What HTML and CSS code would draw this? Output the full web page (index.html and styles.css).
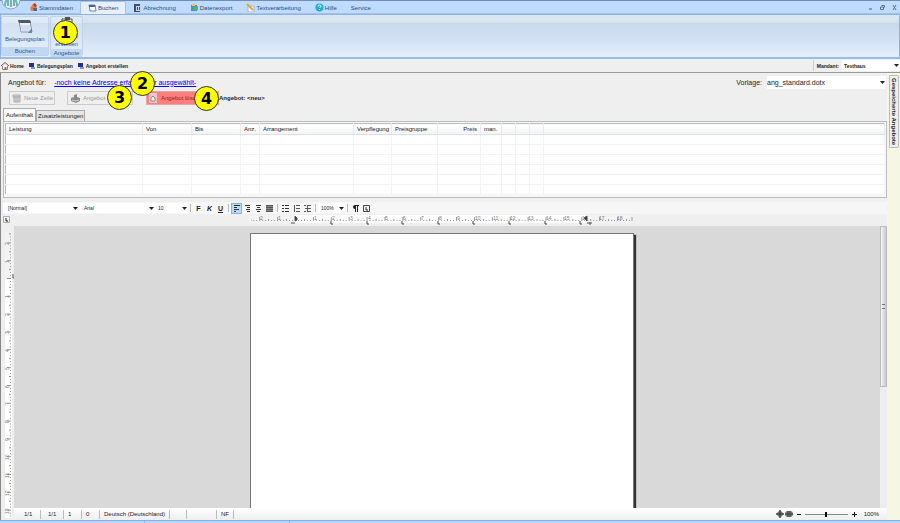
FILE: index.html
```html
<!DOCTYPE html>
<html lang="de">
<head>
  <meta charset="UTF-8">
  <meta name="viewport" content="width=device-width, initial-scale=1.0">
  <title>Angebot erstellen</title>
  <link rel="stylesheet" href="styles.css">
</head>
<body>
  <header class="menubar">
    <button class="orb" type="button" aria-label="Start">
      <svg width="20" height="20" viewBox="0 0 20 20"><circle cx="10" cy="10" r="9" fill="#e9eef3" stroke="#8fa3b8"/><path d="M4 16C4 9 8 7 10 7s6 2 6 9M10 7v10M7 10v6M13 10v6" fill="none" stroke="#6bb5b8" stroke-width="2"/></svg>
    </button>
    <nav class="menu">
      <a href="#"><svg width="9" height="9" viewBox="0 0 9 9"><path d="M1 5l3-4 4 3-2 4H2z" fill="#e8812f"/><path d="M4 1l2-1 2 3-2 1z" fill="#a33b2c"/><path d="M4 5h4v3H5z" fill="#4267a8"/></svg>Stammdaten</a>
      <a href="#" class="active"><svg width="9" height="9" viewBox="0 0 9 9"><path d="M1 1h6l1 6H2z" fill="#fff" stroke="#71859c"/><path d="M1 1h6v2H1z" fill="#456891"/></svg>Buchen</a>
      <a href="#"><svg width="9" height="9" viewBox="0 0 9 9"><path d="M1 1h6v8H1z" fill="#39516f"/><path d="M3 3h5v5H3z" fill="#c6d3e2"/><path d="M4 4h1v3H4zM6 4h1v3H6z" fill="#39516f"/></svg>Abrechnung</a>
      <a href="#"><svg width="9" height="9" viewBox="0 0 9 9"><path d="M1 2h6v6H1z" fill="#4f91c9"/><path d="M2 1h3v2H2z" fill="#f0c94d"/><path d="M4 4l4-1v4H4z" fill="#4db56a"/></svg>Datenexport</a>
      <a href="#"><svg width="9" height="9" viewBox="0 0 9 9"><path d="M2 3h6v6H2z" fill="#f6f8fb" stroke="#a7b6c8"/><path d="M1 1l6 6" stroke="#e5a62c" stroke-width="2"/></svg>Textverarbeitung</a>
      <a href="#"><svg width="9" height="9" viewBox="0 0 9 9"><circle cx="4.500" cy="4.500" r="4" fill="#23abc9"/><path d="M3 3.500q0-1.500 1.500-1.500T6 3.500L4.500 5M4.500 6v1" fill="none" stroke="#fff"/></svg>Hilfe</a>
      <a href="#">Service</a>
    </nav>
    <div class="window-buttons">
      <button type="button" aria-label="Minimieren"><svg width="5" height="5" viewBox="0 0 5 5"><path d="M1 4h3" stroke="#4b5a70"/></svg></button>
      <button type="button" aria-label="Wiederherstellen"><svg width="5" height="5" viewBox="0 0 5 5"><path d="M1.500.5h3v2M.5 2h3v2.500h-3z" fill="none" stroke="#5f6f86"/></svg></button>
      <button type="button" aria-label="Schließen"><svg width="5" height="5" viewBox="0 0 5 5"><path d="M1 0l3 5M4 0L1 5" stroke="#5f6f86"/></svg></button>
    </div>
  </header>

  <section class="ribbon">
    <div class="ribbon-group">
      <button type="button" class="ribbon-button">
        <svg width="16" height="14" viewBox="0 0 16 14"><path d="M2 1h11l2 11H4z" fill="#eef4fa" stroke="#8795a6"/><path d="M1 0h12l1 3H2z" fill="#4f5964"/><path d="M4 6h9M4 8h9M5 10h9" stroke="#b7cbe0"/><path d="M11 13l4-5v5z" fill="#5c87b8"/></svg>
        Belegungsplan
      </button>
      <div class="ribbon-title">Buchen</div>
    </div>
    <div class="ribbon-group">
      <button type="button" class="ribbon-button">
        <svg width="16" height="14" viewBox="0 0 16 14"><path d="M3 2h10v11H3z" fill="#f4f6f8" stroke="#47505c"/><path d="M6 0h5v3H6z" fill="#47505c"/></svg>
        Angebot<br>erstellen
        <span class="badge badge-ribbon">1</span>
      </button>
      <div class="ribbon-title">Angebote</div>
    </div>
  </section>

  <div class="breadcrumb">
    <a href="#"><svg width="8" height="8" viewBox="0 0 8 8"><path d="M0 4l4-3.500L8 4" fill="none" stroke="#6b5648"/><path d="M1.500 4v3.500h5V4" fill="#fff" stroke="#888"/><path d="M3.500 5h2v3h-2z" fill="#b0623a"/></svg>Home</a>
    <a href="#"><svg width="8" height="8" viewBox="0 0 8 8"><path d="M1 1h5v4H1z" fill="#22309c"/><path d="M3 5h4v2H3z" fill="#8d95b5"/></svg>Belegungsplan</a>
    <a href="#"><svg width="8" height="8" viewBox="0 0 8 8"><path d="M1 1h5v4H1z" fill="#22309c"/><path d="M3 5h4v2H3z" fill="#8d95b5"/></svg>Angebot erstellen</a>
    <div class="mandant">
      <label for="mandant">Mandant:</label>
      <select id="mandant"><option>Testhaus</option></select>
    </div>
  </div>

  <div class="workspace">
    <main class="content">
      <div class="offer-row">
        <span>Angebot für:</span>
        <a href="#" class="address">-noch keine Adresse erfasst oder ausgewählt-<span class="badge badge-address">2</span></a>
        <div class="template">
          <label for="vorlage">Vorlage:</label>
          <select id="vorlage"><option>ang_standard.dotx</option></select>
        </div>
      </div>

      <div class="action-row">
        <button type="button" class="action new-line">
          <svg width="9" height="9" viewBox="0 0 9 9"><path d="M1 1h7v2H1zM2 3h6v5H2z" fill="#ddd" stroke="#aaa"/><path d="M3 5h4M3 7h4" stroke="#aaa"/></svg>Neue Zeile
        </button>
        <button type="button" class="action book">
          <svg width="10" height="9" viewBox="0 0 10 9"><path d="M1 4l3-1V1l3-1v3l3 1v3L6 9 1 7z" fill="#8b8b8b"/><path d="M2 6l4 1 3-1" fill="none" stroke="#ccc"/></svg>Angebot buchen
          <span class="badge badge-book">3</span>
        </button>
        <button type="button" class="action delete">
          <svg width="9" height="10" viewBox="0 0 9 10"><path d="M0 0h8v10H0z" fill="#e8c9c9"/><path d="M2 8V5l2-2 2 2v3z" fill="#f4eeee" stroke="#9c8585"/></svg>Angebot löschen
          <span class="badge badge-delete">4</span>
        </button>
        <strong class="offer-name">Angebot: &lt;neu&gt;</strong>
      </div>

      <div class="tabs">
        <button type="button" class="tab active">Aufenthalt</button>
        <button type="button" class="tab">Zusatzleistungen</button>
      </div>

      <div class="table-panel">
        <table class="positions">
          <colgroup>
            <col class="w-leistung"><col class="w-date"><col class="w-date"><col class="w-anz"><col class="w-arrangement"><col class="w-verpflegung"><col class="w-gruppe"><col class="w-preis"><col class="w-man"><col class="w-small"><col class="w-small"><col class="w-small"><col>
          </colgroup>
          <thead>
            <tr><th>Leistung</th><th>Von</th><th>Bis</th><th>Anz.</th><th>Arrangement</th><th>Verpflegung</th><th>Preisgruppe</th><th class="right">Preis</th><th>man.</th><th></th><th></th><th></th><th></th></tr>
          </thead>
          <tbody>
            <tr><td></td><td></td><td></td><td></td><td></td><td></td><td></td><td></td><td></td><td></td><td></td><td></td><td></td></tr>
            <tr><td></td><td></td><td></td><td></td><td></td><td></td><td></td><td></td><td></td><td></td><td></td><td></td><td></td></tr>
            <tr><td></td><td></td><td></td><td></td><td></td><td></td><td></td><td></td><td></td><td></td><td></td><td></td><td></td></tr>
            <tr><td></td><td></td><td></td><td></td><td></td><td></td><td></td><td></td><td></td><td></td><td></td><td></td><td></td></tr>
            <tr><td></td><td></td><td></td><td></td><td></td><td></td><td></td><td></td><td></td><td></td><td></td><td></td><td></td></tr>
            <tr><td></td><td></td><td></td><td></td><td></td><td></td><td></td><td></td><td></td><td></td><td></td><td></td><td></td></tr>
          </tbody>
        </table>
      </div>

      <div class="toolbar">
        <select class="style-select" aria-label="Formatvorlage"><option>[Normal]</option></select>
        <select class="font-select" aria-label="Schriftart"><option>Arial</option></select>
        <select class="size-select" aria-label="Schriftgröße"><option>10</option></select>
        <span class="separator"></span>
        <button type="button" class="tool"><b>F</b></button>
        <button type="button" class="tool"><b><i>K</i></b></button>
        <button type="button" class="tool"><b><u>U</u></b></button>
        <span class="separator"></span>
        <button type="button" class="tool pressed" aria-label="Linksbündig"><svg width="7" height="7" viewBox="0 0 7 7"><path d="M1 .5h6M1 2.500h3M1 4.500h5M1 6.500h2" stroke="#333"/></svg></button>
        <button type="button" class="tool" aria-label="Rechtsbündig"><svg width="7" height="7" viewBox="0 0 7 7"><path d="M1 .5h5M3 2.500h3M2 4.500h4M3 6.500h3" stroke="#333"/></svg></button>
        <button type="button" class="tool" aria-label="Zentriert"><svg width="7" height="7" viewBox="0 0 7 7"><path d="M1 .5h5M2 2.500h3M1 4.500h5M2 6.500h3" stroke="#333"/></svg></button>
        <button type="button" class="tool" aria-label="Blocksatz"><svg width="7" height="7" viewBox="0 0 7 7"><path d="M0 0h7v7H0z" fill="#8a8a8a"/><path d="M0 .5h7M0 2.500h7M0 4.500h7M0 6.500h7" stroke="#555"/></svg></button>
        <span class="separator"></span>
        <button type="button" class="tool" aria-label="Aufzählung"><svg width="7" height="7" viewBox="0 0 7 7"><path d="M0 .5h2M0 3.500h2M0 6.500h2M3 .5h4M3 3.500h4M3 6.500h4" stroke="#333"/></svg></button>
        <button type="button" class="tool" aria-label="Nummerierung"><svg width="7" height="7" viewBox="0 0 7 7"><path d="M1.500 0v7M3 .5h4M3 3.500h4M3 6.500h4" stroke="#555"/></svg></button>
        <button type="button" class="tool" aria-label="Gliederung"><svg width="7" height="7" viewBox="0 0 7 7"><path d="M0 .5h2M1 3.500h2M0 6.500h2M3 .5h4M4 3.500h3M3 6.500h4M3.500 0v7" stroke="#555"/></svg></button>
        <span class="separator"></span>
        <select class="zoom-select" aria-label="Zoom"><option>100%</option></select>
        <span class="separator"></span>
        <button type="button" class="tool" aria-label="Absatzmarken"><svg width="7" height="7" viewBox="0 0 7 7"><path d="M3 0h4v1H6v6H5V1H4v6H3V4Q1 4 1 2t2-2z" fill="#222"/></svg></button>
        <button type="button" class="tool" aria-label="Tabulatoren"><svg width="7" height="7" viewBox="0 0 7 7"><path d="M.5.5h6v6h-6z" fill="#fff" stroke="#444"/><path d="M3 2v3h2" fill="none" stroke="#222"/></svg></button>
      </div>

      <div class="editor">
        <div class="ruler-corner"><svg width="7" height="7" viewBox="0 0 7 7"><path d="M.5.5h6v6h-6z" fill="#f8f8f8" stroke="#aaa"/><path d="M3 2v3h2" fill="none" stroke="#111"/></svg></div>
        <div class="ruler-top">
          <svg class="ruler-h" width="384" height="12" viewBox="0 0 384 12">
            <defs><pattern id="ticks" width="18" height="12" patternUnits="userSpaceOnUse" patternTransform="translate(46) scale(.994 1)"><path d="M0 2h1v4H0zM3 5h1v1H3zM6 5h1v1H6zM9 4h1v2H9zM12 5h1v1H12zM15 5h1v1H15z" fill="#999"/></pattern></defs>
            <path d="M0 0h384v8H0z" fill="#f3f3f3"/>
            <path d="M46 0h292v8H46z" fill="#fff"/>
            <path d="M2 0h381v7H2z" fill="url(#ticks)"/>
            <path d="M383 2v4" stroke="#999"/>
            <g class="ruler-numbers">
              <text x="11" y="5">2</text><text x="29" y="5">1</text><text x="65" y="5">1</text><text x="83" y="5">2</text><text x="101" y="5">3</text><text x="119" y="5">4</text><text x="136" y="5">5</text><text x="154" y="5">6</text><text x="172" y="5">7</text><text x="190" y="5">8</text><text x="208" y="5">9</text><text x="226" y="5">10</text><text x="244" y="5">11</text><text x="261" y="5">12</text><text x="279" y="5">13</text><text x="297" y="5">14</text><text x="315" y="5">15</text><text x="333" y="5">16</text><text x="350" y="5">17</text><text x="368" y="5">18</text>
            </g>
            <path d="M46 1l2 2v2l-2 1zM42 8h4M338 1v5l-3-3zM338 8h5M341 7v3" fill="#333" stroke="#555"/>
            <path d="M82 6v3h2M118 6v3h2M153 6v3h2M189 6v3h2M224 6v3h2M260 6v3h2M296 6v3h2M331 6v3h2" fill="none" stroke="#444"/>
          </svg>
        </div>
        <div class="ruler-side">
          <svg class="ruler-v" width="12" height="294" viewBox="0 0 12 294">
            <defs><pattern id="ticks-v" width="12" height="18" patternUnits="userSpaceOnUse" patternTransform="translate(0 52) scale(1 .99)"><path d="M4 0h4v1H4zM7 3h1v1H7zM7 6h1v1H7zM6 9h2v1H6zM7 12h1v1H7zM7 15h1v1H7z" fill="#999"/></pattern></defs>
            <path d="M2 7h7v45H2z" fill="#f3f3f3"/>
            <path d="M2 52h7v240H2z" fill="#fff"/>
            <path d="M2 7h7v285H2z" fill="url(#ticks-v)"/>
            <g class="ruler-numbers">
              <text transform="translate(6 19) rotate(-90)">2</text><text transform="translate(6 37) rotate(-90)">1</text><text transform="translate(6 72) rotate(-90)">1</text><text transform="translate(6 90) rotate(-90)">2</text><text transform="translate(6 108) rotate(-90)">3</text><text transform="translate(6 126) rotate(-90)">4</text><text transform="translate(6 144) rotate(-90)">5</text><text transform="translate(6 162) rotate(-90)">6</text><text transform="translate(6 179) rotate(-90)">7</text><text transform="translate(6 197) rotate(-90)">8</text><text transform="translate(6 215) rotate(-90)">9</text><text transform="translate(6 234) rotate(-90)">10</text><text transform="translate(6 252) rotate(-90)">11</text><text transform="translate(6 270) rotate(-90)">12</text><text transform="translate(6 288) rotate(-90)">13</text>
            </g>
            <path d="M10 48v4h2" fill="none" stroke="#555"/>
          </svg>
        </div>
        <div class="canvas"><div class="page"></div></div>
        <div class="scrollbar"><div class="thumb"></div></div>
        <footer class="statusbar">
          <span class="cell-page">1/1</span>
          <span class="cell-section">1/1</span>
          <span class="cell-line">1</span>
          <span class="cell-column">0</span>
          <span class="cell-language">Deutsch (Deutschland)</span>
          <span class="cell-empty"></span>
          <span class="cell-wide"></span>
          <span class="cell-mode">NF</span>
          <div class="zoom">
            <svg width="17" height="8" viewBox="0 0 17 8"><path d="M0 4l4-4 4 4-4 4z" fill="#777"/><path d="M0 4h8M4 0v8" stroke="#333"/><rect x="9" y="1" width="8" height="6" rx="3" fill="#777"/><path d="M9 4h8M12 1v6M14 1v6" stroke="#444"/></svg>
            <button type="button" aria-label="Verkleinern"><svg width="5" height="5" viewBox="0 0 5 5"><path d="M1 2.500h4" stroke="#111"/></svg></button>
            <input type="range" min="0" max="200" value="100" aria-label="Zoomstufe">
            <button type="button" aria-label="Vergrößern"><svg width="5" height="5" viewBox="0 0 5 5"><path d="M0 2.500h5M2.500 0v5" stroke="#111"/></svg></button>
            <span>100%</span>
          </div>
        </footer>
      </div>
    </main>

    <aside class="sidebar">
      <button type="button" class="side-tab">Gespeicherte Angebote</button>
    </aside>
  </div>
  <div class="taskbar"><span></span><span></span><span></span></div>
</body>
</html>
```
FILE: styles.css
```css
* {
  box-sizing: border-box;
}
body {
  display: flex;
  flex-direction: column;
  height: 100vh;
  margin: 0;
  overflow: hidden;
  background-color: #efefef;
  color: #222;
  font-family: "Liberation Sans", Arial, sans-serif;
  font-size: 6px;
}
button,
select,
input {
  margin: 0;
  padding: 0;
  border: none;
  border-radius: 0;
  background: none;
  color: inherit;
  font: inherit;
}
a {
  color: inherit;
  text-decoration: none;
}
svg {
  display: block;
  flex: none;
}
select {
  appearance: none;
  background: #fff url("data:image/svg+xml,%3Csvg xmlns='http://www.w3.org/2000/svg' width='5' height='3'%3E%3Cpath d='M0 0h5L2.500 3z' fill='%23222'/%3E%3C/svg%3E") no-repeat right 1px center;
}

/* menu */
.menubar {
  position: relative;
  display: flex;
  flex: none;
  height: 14px;
  border-top: 1px solid #6f8db8;
  border-bottom: 1px solid #a5c3ea;
  background-color: #bfdbff;
  color: #2b4a7d;
}
.orb {
  position: absolute;
  top: -11px;
  left: 1px;
  z-index: 1;
}
.menu {
  display: flex;
  padding-left: 22px;
}
.menu a {
  display: flex;
  align-items: center;
  gap: 1px;
  height: 13px;
  padding: 0 7px;
}
.menu .active {
  border: 1px solid #a3c3ec;
  border-bottom: none;
  border-radius: 2px 2px 0 0;
  background-color: #e6f0fc;
}
.window-buttons {
  display: flex;
  align-items: center;
  gap: 7px;
  margin-left: auto;
  padding-right: 3px;
}

/* ribbon */
.ribbon {
  display: flex;
  flex: none;
  gap: 1px;
  height: 45px;
  padding: 1px 0;
  border: 1px solid #8db2e3;
  border-bottom: 2px solid #98bde0;
  background: linear-gradient(#dbe7f3 0, #d5e3f0 8px, #c8d9eb 8px, #d3e2f4 60%, #e3effd);
  color: #34568c;
}
.ribbon-group {
  display: flex;
  flex-direction: column;
  border: 1px solid #c0d3e8;
  border-radius: 2px;
  background-color: rgba(255, 255, 255, 0.2);
}
.ribbon-button {
  position: relative;
  flex: 1;
  padding: 0 3px 1px;
  line-height: 8px;
  text-align: center;
}
.ribbon-button svg {
  margin: 0 auto 1px;
}
.ribbon-title {
  height: 8px;
  padding: 0 3px;
  background-color: #c1d8f0;
  line-height: 8px;
  text-align: center;
}

/* numbered markers */
.badge {
  position: absolute;
  z-index: 2;
  display: flex;
  align-items: center;
  justify-content: center;
  width: 25px;
  height: 25px;
  border: 1px solid #333;
  border-radius: 50%;
  background-color: #ff0;
  color: #000;
  font: bold 16px "DejaVu Sans", sans-serif;
}
.badge-ribbon {
  top: 3px;
  left: 2px;
}
.badge-address {
  top: -8px;
  left: 76px;
}
.badge-book {
  top: -7px;
  right: 0;
}
.badge-delete {
  top: -6px;
  right: -1px;
}

/* breadcrumb */
.breadcrumb {
  display: flex;
  flex: none;
  align-items: center;
  gap: 4px;
  height: 14px;
  padding-left: 1px;
  border-bottom: 1px solid #999;
  font-size: 5px;
  font-weight: bold;
}
.breadcrumb a {
  display: flex;
  align-items: center;
  gap: 1px;
}
.mandant {
  display: flex;
  align-items: center;
  gap: 3px;
  height: 11px;
  margin-left: auto;
  padding-left: 3px;
  border-left: 1px solid #ccc;
}
.mandant select {
  width: 58px;
  height: 11px;
  padding-left: 2px;
}

/* work area */
.workspace {
  display: flex;
  flex: 1;
  min-height: 0;
}
.content {
  display: flex;
  flex: 1;
  flex-direction: column;
  min-width: 0;
  padding-left: 2px;
  border-left: 1px solid #888;
}
.offer-row {
  display: flex;
  flex: none;
  align-items: center;
  height: 18px;
  padding: 0 1px 0 5px;
  font-size: 7px;
}
.address {
  position: relative;
  margin-left: 8px;
  color: #00f;
  text-decoration: underline;
}
.template {
  display: flex;
  align-items: center;
  gap: 5px;
  margin-left: auto;
}
.template select {
  width: 119px;
  height: 13px;
  line-height: 13px;
}
.action-row {
  display: flex;
  flex: none;
  align-items: center;
  height: 14px;
  padding-left: 6px;
}
.action {
  position: relative;
  display: flex;
  align-items: center;
  gap: 3px;
  height: 14px;
  padding: 0 2px;
  border: 1px solid #ccc;
  color: #999;
  white-space: nowrap;
}
.new-line {
  width: 46px;
}
.book {
  width: 66px;
  margin-left: 12px;
}
.delete {
  width: 73px;
  margin-left: 13px;
  border-color: #eba5a5;
  background-color: #ff7f7f;
  color: #8c1c1c;
}
.tabs {
  display: flex;
  flex: none;
  align-items: flex-end;
  height: 16px;
}
.tab {
  height: 11px;
  padding: 0 1px;
  border: 1px solid #aaa;
  border-bottom: none;
  background-color: #e6e6e6;
}
.tab.active {
  height: 13px;
  padding: 0 2px;
  background-color: #fafafa;
}
.table-panel {
  flex: none;
  padding: 1px 1px 2px;
  border: 1px solid #bbb;
  background-color: #f7f7f7;
}

/* positions table */
.positions {
  width: 100%;
  border: 1px solid #b9bcc4;
  border-collapse: collapse;
  table-layout: fixed;
  background-color: #fff;
}
.positions th {
  height: 11px;
  padding: 0 3px;
  border-right: 1px solid #eaeaea;
  border-bottom: 1px solid #e0e0e0;
  background: linear-gradient(#fff, #f3f4f6);
  font-weight: normal;
  line-height: 8px;
  text-align: left;
  white-space: nowrap;
}
.positions .right {
  text-align: right;
}
.positions td {
  height: 10px;
  padding: 0;
  border-right: 1px solid #f3f3f3;
  border-bottom: 1px solid #f3f3f3;
}
.w-leistung {
  width: 137px;
}
.w-date {
  width: 49px;
}
.w-anz {
  width: 19px;
}
.w-arrangement {
  width: 94px;
}
.w-verpflegung {
  width: 38px;
}
.w-gruppe {
  width: 46px;
}
.w-preis {
  width: 43px;
}
.w-man {
  width: 21px;
}
.w-small {
  width: 14px;
}

/* editor toolbar */
.toolbar {
  display: flex;
  flex: none;
  align-items: center;
  height: 12px;
  margin-top: 4px;
  background-color: #f6f6f6;
  font-size: 5px;
}
.toolbar select {
  height: 10px;
  padding-left: 5px;
}
.style-select,
.font-select {
  width: 76px;
}
.size-select {
  width: 33px;
}
.zoom-select {
  width: 27px;
}
.toolbar .size-select,
.toolbar .zoom-select {
  padding-left: 3px;
}
.separator {
  width: 1px;
  height: 8px;
  margin: 0 2px;
  background-color: #bbb;
}
.tool {
  display: flex;
  align-items: center;
  justify-content: center;
  width: 11px;
  height: 11px;
  font-size: 7px;
}
.pressed {
  border: 1px solid #7fb4e8;
  background-color: #b9dafa;
}

/* document */
.editor {
  display: grid;
  flex: 1;
  grid-template-columns: 11px 1fr 7px;
  grid-template-rows: 12px 1fr 12px;
  min-height: 0;
}
.ruler-corner {
  padding-top: 2px;
}
.ruler-top {
  grid-column: 2 / 4;
  padding-right: 20px;
}
.ruler-h {
  margin: 1px auto 0;
}
.ruler-numbers {
  fill: #777;
  font-size: 5px;
}
.ruler-side {
  grid-row: 2 / 4;
  min-height: 0;
  overflow: hidden;
}
.canvas {
  padding: 7px 11px 0 0;
  overflow: hidden;
  background-color: #d9d9d9;
}
.page {
  width: 384px;
  height: 100%;
  margin: 0 auto;
  border: 1px solid #777;
  border-bottom: none;
  background-color: #fff;
  box-shadow: 2px 2px 1px #333;
}
.scrollbar {
  background-color: #ededed;
}
.thumb {
  display: flex;
  align-items: center;
  justify-content: center;
  height: 57%;
  border: 1px solid #bbb;
  background: linear-gradient(to right, #f4f4f4, #c8c8c8);
}
.thumb::before {
  width: 3px;
  height: 3px;
  border-top: 1px solid #777;
  border-bottom: 1px solid #777;
  content: "";
}

/* status bar */
.statusbar {
  display: flex;
  grid-column: 2 / 4;
  align-items: center;
  background: linear-gradient(#fff, #eee);
}
.statusbar > span {
  height: 9px;
  padding-left: 4px;
  border-right: 1px solid #bbb;
  line-height: 9px;
}
.statusbar .cell-page {
  width: 27px;
  padding-left: 10px;
}
.statusbar .cell-section {
  width: 23px;
  padding-left: 7px;
}
.cell-line,
.cell-column {
  width: 18px;
}
.cell-language {
  width: 70px;
}
.cell-empty {
  width: 17px;
}
.cell-wide {
  width: 30px;
}
.cell-mode {
  width: 17px;
}
.zoom {
  display: flex;
  align-items: center;
  gap: 3px;
  margin-left: auto;
  padding-right: 8px;
}
.zoom input {
  width: 43px;
  height: 7px;
  margin: 0 1px;
  appearance: none;
  background: linear-gradient(#888, #888) no-repeat center / 100% 1px;
}
.zoom input::-webkit-slider-thumb {
  width: 2px;
  height: 5px;
  appearance: none;
  background-color: #000;
}
.zoom span {
  margin-left: 4px;
}

/* saved offers */
.sidebar {
  flex: none;
  width: 13px;
  padding: 2px 1px 0 2px;
  background-color: #f5f6e4;
}
.side-tab {
  width: 10px;
  height: 73px;
  border: 1px solid #bbb;
  border-radius: 0 2px 2px 0;
  background-color: #efefef;
  font-weight: bold;
  line-height: 8px;
  writing-mode: vertical-rl;
}
.taskbar {
  display: flex;
  flex: none;
  gap: 1px;
  height: 3px;
  border-top: 1px solid #7fb0ee;
  background-color: #8db6ec;
}
.taskbar span {
  width: 16%;
  background-color: #b5d5fb;
}
.taskbar span:last-child {
  flex: 1;
}
```
